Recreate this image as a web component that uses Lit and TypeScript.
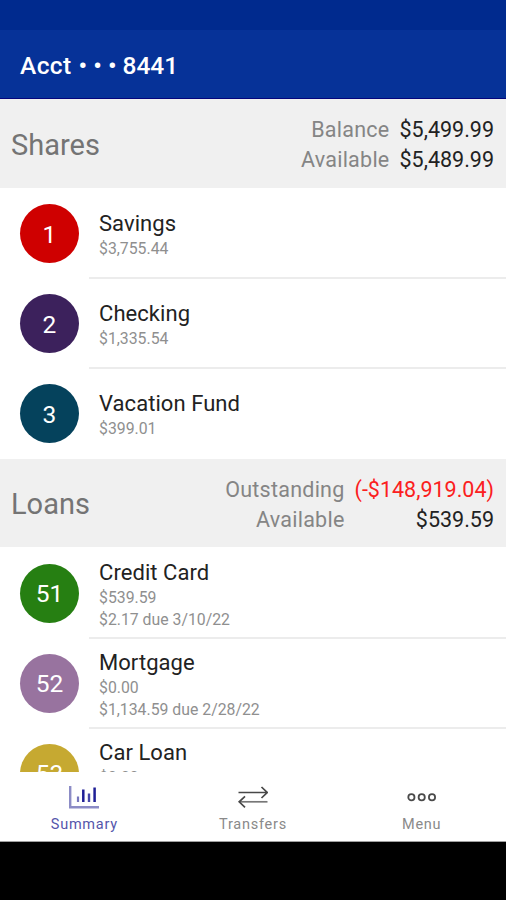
import { LitElement, html, css, svg } from "lit";
import { customElement, property } from "lit/decorators.js";
import { styleMap } from "lit/directives/style-map.js";

interface Account {
  id: string;
  name: string;
  color: string;
  lines: string[];
}

interface Total {
  label: string;
  value: string;
  negative?: boolean;
}

interface Group {
  title: string;
  totals: Total[];
  accounts: Account[];
}

const GROUPS: Group[] = [
  {
    title: "Shares",
    totals: [
      { label: "Balance", value: "$5,499.99" },
      { label: "Available", value: "$5,489.99" },
    ],
    accounts: [
      { id: "1", name: "Savings", color: "#cf0000", lines: ["$3,755.44"] },
      { id: "2", name: "Checking", color: "#3c215c", lines: ["$1,335.54"] },
      { id: "3", name: "Vacation Fund", color: "#05425c", lines: ["$399.01"] },
    ],
  },
  {
    title: "Loans",
    totals: [
      { label: "Outstanding", value: "(-$148,919.04)", negative: true },
      { label: "Available", value: "$539.59" },
    ],
    accounts: [
      { id: "51", name: "Credit Card", color: "#267f12", lines: ["$539.59", "$2.17 due 3/10/22"] },
      { id: "52", name: "Mortgage", color: "#98739f", lines: ["$0.00", "$1,134.59 due 2/28/22"] },
      { id: "53", name: "Car Loan", color: "#c6a931", lines: ["$0.00"] },
    ],
  },
];

@customElement("account-row")
class AccountRow extends LitElement {
  @property({ attribute: false }) account!: Account;

  static styles = css`
    :host {
      display: flex;
      height: 90px;
      box-sizing: border-box;
      padding-left: 20px;
      align-items: stretch;
    }
    .badge {
      width: 59px;
      height: 59px;
      margin: 16.5px 10px 0 0;
      border-radius: 50%;
      display: flex;
      align-items: center;
      justify-content: center;
      color: #fff;
      font-size: 24.5px;
      line-height: 30px;
      padding-top: 2px;
      box-sizing: border-box;
      flex: none;
    }
    .body {
      flex: 1;
      display: flex;
      flex-direction: column;
      padding: 22px 0 0 10px;
      margin-bottom: -1px;
      border-bottom: 2px solid #ececec;
    }
    :host([due]) .body {
      padding-top: 12px;
      margin-bottom: -2px;
    }
    :host([last]) .body {
      border-bottom-color: transparent;
    }
    .name {
      font-size: 22px;
      line-height: 28px;
      letter-spacing: 0.06px;
      color: #222;
    }
    .line {
      font-size: 15.8px;
      line-height: 22px;
      color: #8f8f8f;
    }
  `;

  render() {
    const a = this.account;
    return html`
      <div class="badge" style=${styleMap({ backgroundColor: a.color })}>${a.id}</div>
      <div class="body">
        <div class="name">${a.name}</div>
        ${a.lines.map((l) => html`<div class="line">${l}</div>`)}
      </div>
    `;
  }
}

@customElement("account-group")
class AccountGroup extends LitElement {
  @property({ attribute: false }) group!: Group;

  static styles = css`
    :host {
      display: block;
    }
    :host(:not(:last-child)) {
      padding-bottom: 1px;
    }
    .head {
      height: 88.5px;
      box-sizing: border-box;
      padding: 2px 12px 0 11px;
      background: #f0f0f0;
      display: flex;
      align-items: center;
      justify-content: space-between;
    }
    .title {
      font-size: 29px;
      line-height: 36px;
      color: #747474;
      padding-top: 1px;
    }
    .totals {
      display: grid;
      grid-template-columns: auto auto;
      column-gap: 10px;
      font-size: 21.5px;
      line-height: 30px;
      text-align: right;
      color: #222;
      padding-top: 2px;
    }
    .label {
      color: #858585;
      letter-spacing: 0.25px;
    }
    .negative {
      color: #fb2020;
    }
  `;

  render() {
    const g = this.group;
    return html`
      <div class="head">
        <div class="title">${g.title}</div>
        <div class="totals">
          ${g.totals.map(
            (t) => html`
              <span class="label">${t.label}</span>
              <span class=${t.negative ? "negative" : "value"}>${t.value}</span>
            `
          )}
        </div>
      </div>
      ${g.accounts.map(
        (a, i) => html`
          <account-row
            .account=${a}
            ?due=${g.title === "Loans"}
            ?last=${i === g.accounts.length - 1}
          ></account-row>
        `
      )}
    `;
  }
}

const chartIcon = svg`
  <path d="M1.2 1V22.3H30" stroke="#8c8cc6" stroke-width="2.4" />
  <path d="M9 11.5V17" stroke="#7777bd" stroke-width="2.2" />
  <path d="M14.3 4.5V17M25.6 2.5V17" stroke="#1f1f96" stroke-width="2.5" />
  <path d="M20 8.5V17" stroke="#4646a8" stroke-width="2.4" />`;

const transferIcon = svg`
  <path d="M1.5 7.5H30M24.5 2L30.2 7.5L24.5 13" stroke="#484848" stroke-width="1.7" />
  <path d="M30.5 16.8H2.5" stroke="#777" stroke-width="1.7" />
  <path d="M8 11.3L2.2 16.8L8 22.3" stroke="#484848" stroke-width="1.7" />`;

const menuIcon = svg`
  <g stroke="#4a4a4a" stroke-width="1.8">
    <circle cx="5.4" cy="12.2" r="3.1" />
    <circle cx="15.7" cy="12.2" r="3.1" />
    <circle cx="26" cy="12.2" r="3.1" />
  </g>`;

@customElement("app-root")
class AppRoot extends LitElement {
  static styles = css`
    :host {
      display: flex;
      flex-direction: column;
      height: 900px;
      overflow: hidden;
      background: #fff;
      font-family: Roboto, sans-serif;
    }
    .status {
      height: 30px;
      flex: none;
      background: #002a8e;
    }
    .bar {
      height: 69px;
      flex: none;
      box-sizing: border-box;
      padding: 3px 20px 0;
      display: flex;
      align-items: center;
      background: #063298;
      border-bottom: 1px solid #05057c;
      color: #fff;
      font-size: 24.5px;
      font-weight: 500;
      gap: 7px;
    }
    .acct {
      letter-spacing: 0.4px;
    }
    .dots {
      margin-right: -1px;
    }
    .content {
      flex: 1;
      min-height: 0;
      overflow: hidden;
    }
    .tabs {
      height: 70px;
      flex: none;
      box-sizing: border-box;
      display: grid;
      grid-template-columns: repeat(3, 1fr);
      background: #fff;
      border-bottom: 1px solid #a0a0a0;
    }
    .tab {
      display: flex;
      flex-direction: column;
      align-items: center;
      padding-top: 13px;
      font-size: 14.5px;
      line-height: 20px;
      letter-spacing: 0.75px;
      color: #8a8a8a;
    }
    .tab svg {
      margin-bottom: 6px;
      flex: none;
    }
    .active {
      color: #5555ab;
    }
    .system {
      height: 58px;
      flex: none;
      background: #000;
    }
  `;

  tab(label: string, icon: unknown, active = false) {
    return html`
      <div class=${active ? "tab active" : "tab"}>
        <svg width="31" height="24" viewBox="0 0 31 24" fill="none">${icon}</svg>
        <span>${label}</span>
      </div>
    `;
  }

  render() {
    return html`
      <div class="status"></div>
      <div class="bar"><span class="acct">Acct</span><span class="dots">• • •</span><span>8441</span></div>
      <div class="content">
        ${GROUPS.map((g) => html`<account-group .group=${g}></account-group>`)}
      </div>
      <div class="tabs">
        ${this.tab("Summary", chartIcon, true)}
        ${this.tab("Transfers", transferIcon)}
        ${this.tab("Menu", menuIcon)}
      </div>
      <div class="system"></div>
    `;
  }
}
